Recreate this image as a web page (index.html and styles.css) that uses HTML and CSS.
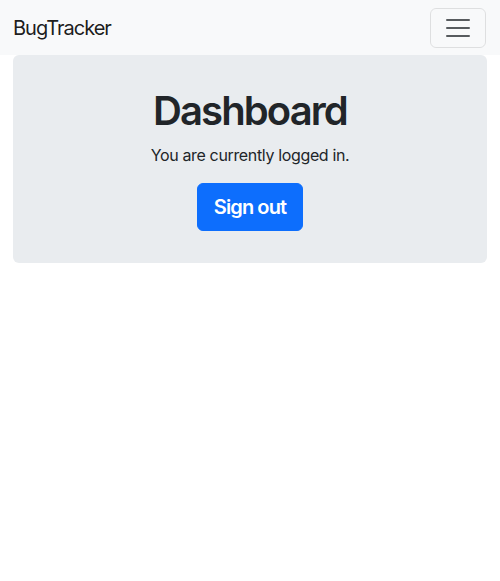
FILE: index.html
```html
<!DOCTYPE html>
<html lang="en">
<head>
<meta charset="utf-8">
<title>BugTracker</title>
<link rel="stylesheet" href="styles.css">
</head>
<body>
<nav class="navbar">
  <a class="brand" href="#">BugTracker</a>
  <button class="toggler" type="button" aria-label="Toggle navigation">
    <svg class="toggler-icon" viewBox="0 0 30 30" width="30" height="30" aria-hidden="true">
      <path d="M4 7h22M4 15h22M4 23h22" stroke="rgba(33,37,41,0.75)" stroke-width="2" stroke-linecap="round" fill="none"/>
    </svg>
  </button>
</nav>
<main class="panel">
  <h1 class="title">Dashboard</h1>
  <p class="lead">You are currently logged in.</p>
  <button class="btn-signout" type="button">Sign out</button>
</main>
</body>
</html>
```
FILE: styles.css
```css
* { box-sizing: border-box; }
html, body { margin: 0; padding: 0; }
body {
  font-family: Inter, "Liberation Sans", Arial, sans-serif;
  font-size: 16px;
  line-height: 1.5;
  color: #212529;
  background: #fff;
}
.navbar {
  height: 55px;
  background: #f8f9fa;
  display: flex;
  align-items: center;
  justify-content: space-between;
  padding: 0 14px 0 13px;
}
.brand {
  font-size: 20px;
  letter-spacing: -1px;
  color: rgba(0,0,0,0.9);
  text-decoration: none;
}
.toggler {
  width: 56px;
  height: 40px;
  padding: 0;
  display: flex;
  align-items: center;
  justify-content: center;
  background: transparent;
  border: 1px solid rgba(0,0,0,0.1);
  border-radius: 6px;
  margin-top: 0;
}
.toggler-icon { display: block; }
.panel {
  margin: 0 13px;
  padding: 32px 16px;
  background: #e9ecef;
  border-radius: 6px;
  display: flex;
  flex-direction: column;
  align-items: center;
  text-align: center;
}
.title {
  margin: 0 0 8px;
  font-size: 40px;
  font-weight: 600;
  letter-spacing: -1.9px;
  line-height: 48px;
}
.lead {
  margin: 0 0 16px;
  font-size: 16px;
  letter-spacing: -0.35px;
  line-height: 24px;
}
.btn-signout {
  font-family: inherit;
  font-size: 20px;
  font-weight: 600;
  letter-spacing: -0.9px;
  line-height: 30px;
  padding: 8px 16px;
  color: #fff;
  background: #0d6efd;
  border: 1px solid #0d6efd;
  border-radius: 6px;
  height: 48px;
}
```
